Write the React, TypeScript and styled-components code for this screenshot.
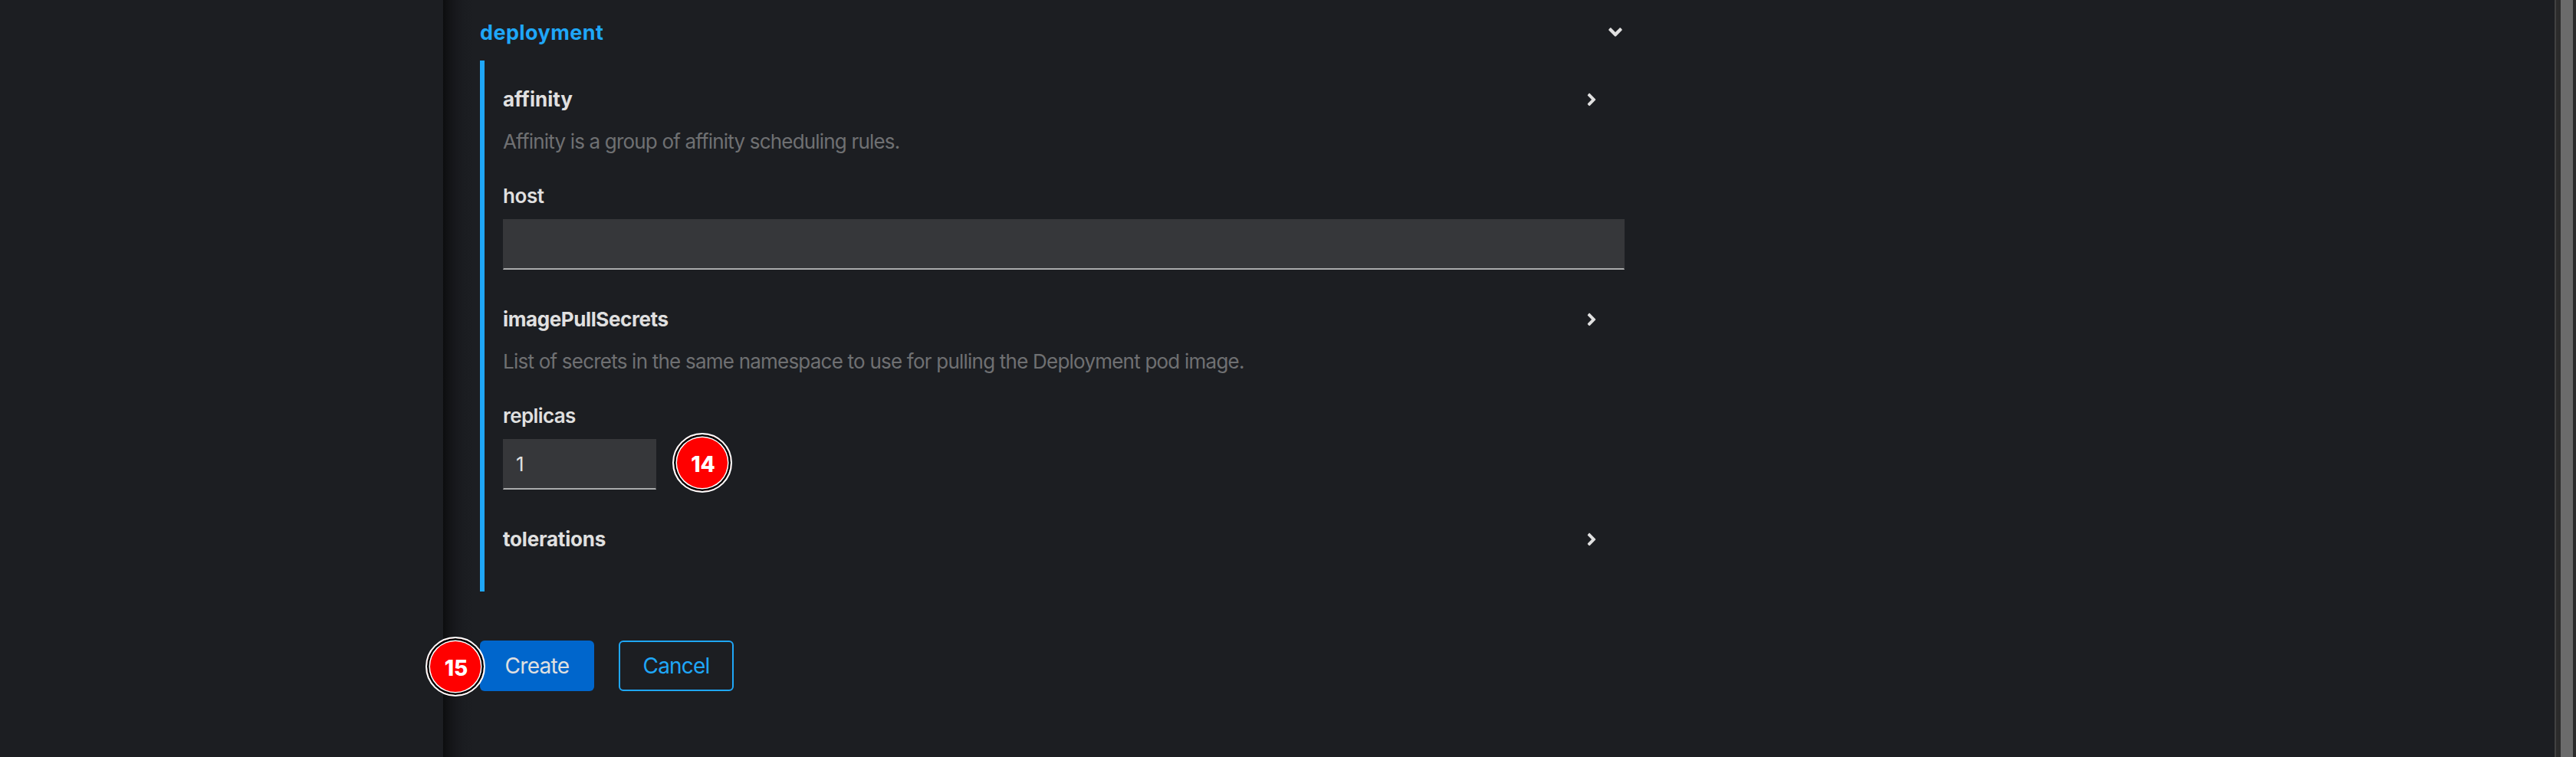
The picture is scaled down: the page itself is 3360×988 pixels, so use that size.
import React from "react";
import styled, { createGlobalStyle } from "styled-components";
import { FaAngleDown, FaAngleRight } from "react-icons/fa";

const GlobalStyle = createGlobalStyle`
  * { box-sizing: border-box; }
  body {
    margin: 0;
    background: #1c1e22;
    font-family: Inter, "Liberation Sans", sans-serif;
    color: #e0e0e0;
  }
`;

const Page = styled.div`
  position: relative;
  display: flex;
  width: 3360px;
  height: 988px;
  overflow: hidden;
  background: #1c1e22;
`;

const Sidebar = styled.aside`
  width: 578px;
  flex: none;
  background: #1c1e22;
`;

const Main = styled.main`
  flex: 1;
  padding: 16px 0 0 48px;
  background: linear-gradient(
    to right,
    #0c0d0e 0,
    #101113 4px,
    #141518 10px,
    #18191d 18px,
    #1a1c20 26px,
    #1c1e22 38px
  );
`;

const Form = styled.form`
  width: 1493px;
`;

const Text = styled.span<{ $track?: number }>`
  letter-spacing: ${(p) => p.$track ?? 0}px;
  white-space: nowrap;
`;

const GroupHeader = styled.div`
  display: flex;
  align-items: center;
  justify-content: space-between;
  height: 52px;
  color: #1fa7f8;
  font-size: 27px;
  font-weight: 700;
  svg {
    color: #e0e0e0;
    margin-right: -2px;
  }
`;

const GroupBody = styled.div`
  margin-top: 11px;
  height: 693px;
  padding: 31px 0 0 24px;
  border-left: 6px solid #1fa7f8;
`;

const FieldHeader = styled.div`
  display: flex;
  align-items: center;
  justify-content: space-between;
  height: 40px;
  padding-right: 30px;
  font-size: 26px;
  font-weight: 700;
  span { margin-top: -2px; }
`;

const Description = styled.p`
  margin: 15px 0 0;
  height: 40px;
  line-height: 40px;
  font-size: 26px;
  color: #6f7072;
`;

const Field = styled.div`
  margin-top: 31px;
`;

const Label = styled.label`
  display: block;
  height: 40px;
  line-height: 40px;
  font-size: 26px;
  font-weight: 600;
`;

const Input = styled.input<{ $width: number }>`
  display: block;
  width: ${(p) => p.$width}px;
  height: 66px;
  margin: 10px 0 0;
  padding: 0 16px;
  border: 1px solid #36373a;
  border-bottom: 2px solid #aaabac;
  border-radius: 0;
  outline: none;
  background: #36373a;
  color: #e0e0e0;
  font: 400 26px Inter, sans-serif;
`;

const Spaced = styled.div<{ $top: number }>`
  margin-top: ${(p) => p.$top}px;
`;

const Actions = styled.div`
  display: flex;
  gap: 32px;
  margin-top: 64px;
`;

const Button = styled.button<{ $primary?: boolean; $width: number }>`
  width: ${(p) => p.$width}px;
  height: 66px;
  padding: 0;
  border: ${(p) => (p.$primary ? "0" : "2px solid #1fa7f8")};
  border-radius: 6px;
  background: ${(p) => (p.$primary ? "#0066cc" : "transparent")};
  color: ${(p) => (p.$primary ? "#e0e0e0" : "#1fa7f8")};
  font: 400 28px Inter, sans-serif;
`;

const StepBadge = styled.div<{ $x: number; $y: number }>`
  position: absolute;
  left: ${(p) => p.$x}px;
  top: ${(p) => p.$y}px;
  width: 78px;
  height: 78px;
  padding: 3px 0 0 2px;
  display: flex;
  align-items: center;
  justify-content: center;
  border: 2px solid #fff;
  border-radius: 50%;
  background: #f00;
  box-shadow: inset 0 0 0 2.5px #000, inset 0 0 0 4px #fff;
  color: #fff;
  font-size: 28px;
  font-weight: 800;
`;

const Scrollbar = styled.div`
  width: 28px;
  flex: none;
  padding-left: 6px;
  border-left: 2px solid #414141;
  background: #2b2b2b;
`;

const Thumb = styled.div`
  width: 16px;
  height: 100%;
  background: #6b6b6b;
`;

export default function App() {
  return (
    <>
      <GlobalStyle />
      <Page>
        <Sidebar />
        <Main>
          <Form>
            <GroupHeader>
              <Text $track={0.4}>deployment</Text>
              <FaAngleDown size={28} />
            </GroupHeader>
            <GroupBody>
              <FieldHeader>
                <Text $track={0}>affinity</Text>
                <FaAngleRight size={26} />
              </FieldHeader>
              <Description>
                <Text $track={-0.82}>Affinity is a group of affinity scheduling rules.</Text>
              </Description>
              <Field>
                <Label><Text $track={-0.4}>host</Text></Label>
                <Input $width={1463} />
              </Field>
              <Spaced $top={45}>
                <FieldHeader>
                  <Text $track={-0.4}>imagePullSecrets</Text>
                  <FaAngleRight size={26} />
                </FieldHeader>
                <Description>
                  <Text $track={-0.78}>
                    List of secrets in the same namespace to use for pulling the Deployment pod image.
                  </Text>
                </Description>
              </Spaced>
              <Field>
                <Label><Text $track={-0.6}>replicas</Text></Label>
                <Input $width={200} defaultValue="1" />
              </Field>
              <Spaced $top={45}>
                <FieldHeader>
                  <Text $track={-0.2}>tolerations</Text>
                  <FaAngleRight size={26} />
                </FieldHeader>
              </Spaced>
            </GroupBody>
            <Actions>
              <Button type="button" $primary $width={149}><Text $track={-0.7}>Create</Text></Button>
              <Button type="button" $width={150}><Text $track={-0.8}>Cancel</Text></Button>
            </Actions>
          </Form>
        </Main>
        <Scrollbar><Thumb /></Scrollbar>
        <StepBadge $x={877} $y={565}>14</StepBadge>
        <StepBadge $x={555} $y={831}>15</StepBadge>
      </Page>
    </>
  );
}
